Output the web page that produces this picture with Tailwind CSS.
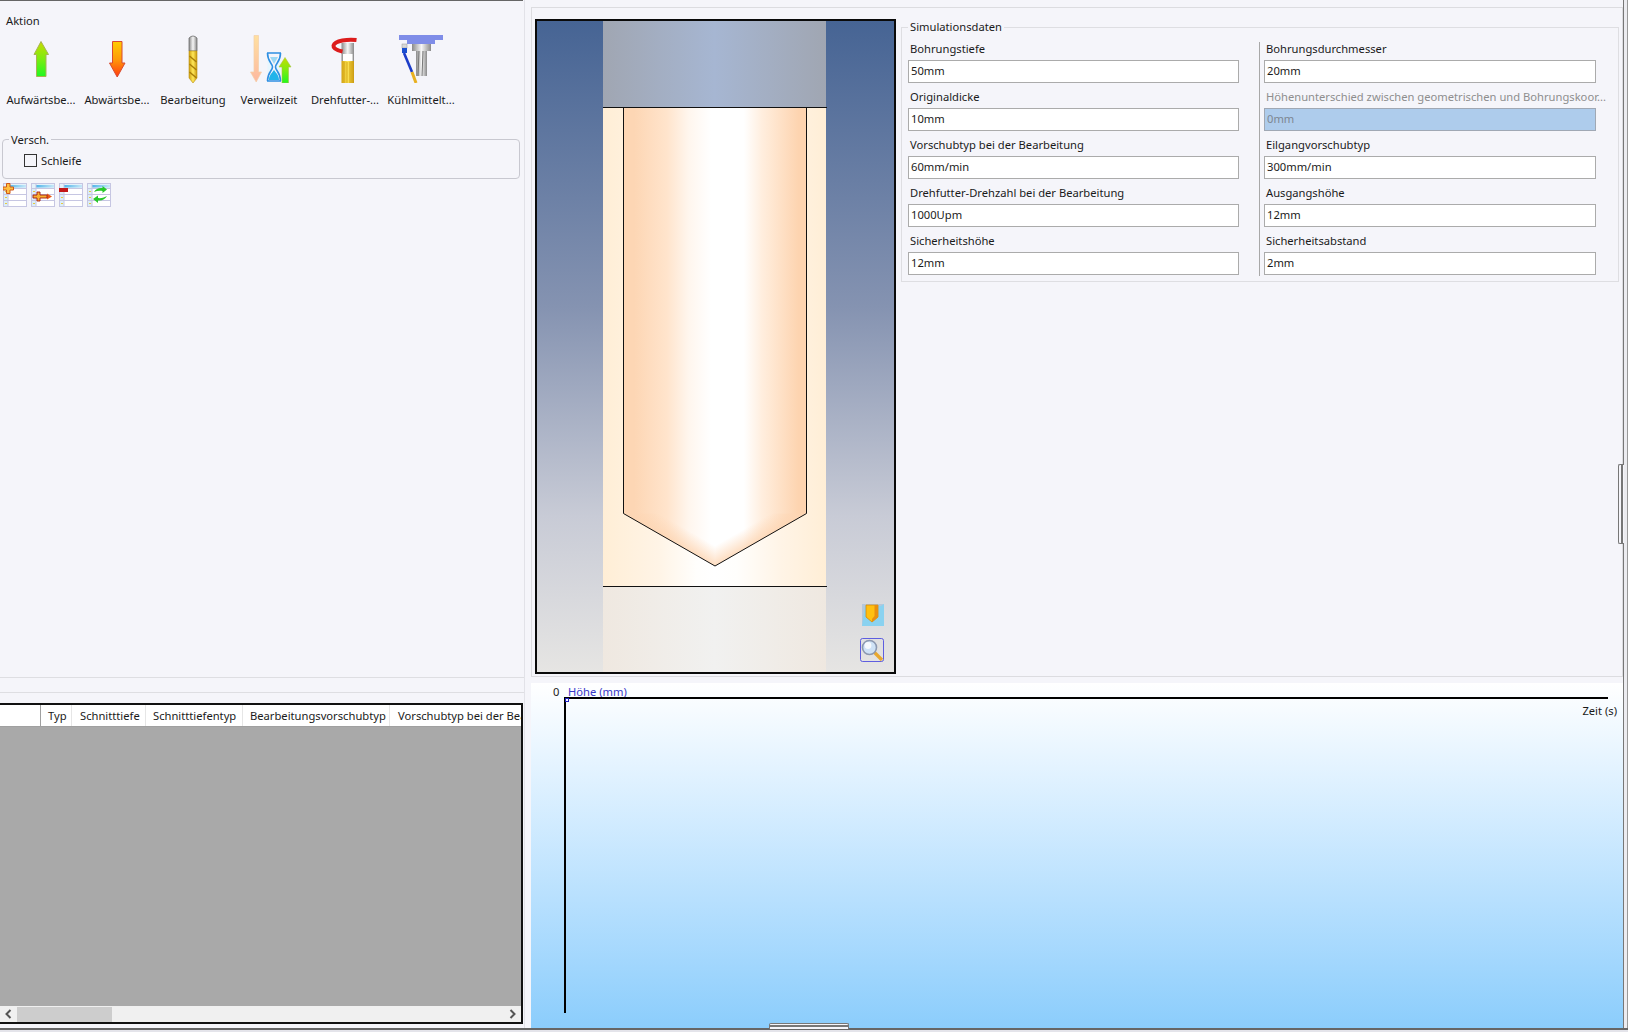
<!DOCTYPE html>
<html lang="de">
<head>
  <meta charset="UTF-8">
  <title>Simulationsdaten</title>
  <script src="https://cdn.jsdelivr.net/npm/@tailwindcss/browser@4"></script>
</head>
<body class="w-[1628px] h-[1032px] overflow-hidden bg-[#f5f5fa] text-[11.2px] text-[#1a1a1a] font-['Noto_Sans','Open_Sans',sans-serif]">

  <!-- shared drawings for the small table buttons -->
  <svg width="0" height="0" class="absolute">
    <defs>
      <linearGradient id="gUp" x1="0" y1="0" x2="0" y2="1"><stop offset="0" stop-color="#c8dc00"/><stop offset=".5" stop-color="#7cec10"/><stop offset="1" stop-color="#20f820"/></linearGradient>
      <linearGradient id="gDown" x1="0" y1="0" x2="0" y2="1"><stop offset="0" stop-color="#ffcc00"/><stop offset=".5" stop-color="#ff9a08"/><stop offset="1" stop-color="#ff3a10"/></linearGradient>
      <linearGradient id="gSteel" x1="0" y1="0" x2="1" y2="0"><stop offset="0" stop-color="#8a8a8a"/><stop offset=".5" stop-color="#f6f6f6"/><stop offset="1" stop-color="#8a8a8a"/></linearGradient>
      <linearGradient id="gGold" x1="0" y1="0" x2="1" y2="0"><stop offset="0" stop-color="#d0a010"/><stop offset=".5" stop-color="#ffe858"/><stop offset="1" stop-color="#c89810"/></linearGradient>
      <linearGradient id="gPeach" x1="0" y1="0" x2="0" y2="1"><stop offset="0" stop-color="#ffe0a0"/><stop offset="1" stop-color="#fdb8a0"/></linearGradient>
      <linearGradient id="gBar" x1="0" y1="0" x2="1" y2="0"><stop offset="0" stop-color="#4fb4e8"/><stop offset="1" stop-color="#c8e8f8"/></linearGradient>
      <symbol id="tbl" viewBox="0 0 24 24">
        <rect x=".5" y=".5" width="23" height="23" fill="#fff" stroke="#c6c6e2"/>
        <rect x="1" y="1" width="22" height="4" fill="#e4f2fa"/>
        <rect x="5" y="2" width="18" height="2.5" fill="url(#gBar)"/>
        <rect x="1" y="5" width="4" height="18" fill="#dbeef8"/>
        <path d="M1 5.5H23M1 11.5H23M1 17.5H23M5 1V23" stroke="#c6c6e2" fill="none"/>
        <path d="M2 8.5H4M2 14.5H4M2 20.5H4" stroke="#e8c840" fill="none"/>
      </symbol>
    </defs>
  </svg>

  <div class="flex h-[1028px]">

    <!-- left column -->
    <div class="w-[525px] shrink-0 flex flex-col border-r border-[#e2e2e8]">
      <div class="h-[678px] shrink-0 border-b border-[#dedee2]">
        <div class="h-px w-[523px] bg-[#666]"></div>
        <div class="h-[34px] pt-[11px] pl-[6px] leading-[18px]">Aktion</div>

        <div class="flex pl-[3px]">
          <div class="w-[76px] flex flex-col items-center">
            <svg width="48" height="48" viewBox="0 0 48 48"><path d="M24 6.5L31.5 19.5H29V41.5H19.5V19.5H17Z" fill="url(#gUp)" stroke="#a8b450"/></svg>
            <div class="mt-[8px] leading-[18px]">Aufwärtsbe...</div>
          </div>
          <div class="w-[76px] flex flex-col items-center">
            <svg width="48" height="48" viewBox="0 0 48 48"><path d="M19.5 6.5H29V28H32L24.2 42L16.5 28H19.5Z" fill="url(#gDown)" stroke="#d84a30"/></svg>
            <div class="mt-[8px] leading-[18px]">Abwärtsbe...</div>
          </div>
          <div class="w-[76px] flex flex-col items-center">
            <svg width="48" height="48" viewBox="0 0 48 48">
              <path d="M20 16V3Q24 -1 28 3V16Z" fill="url(#gSteel)" stroke="#707070" stroke-width=".8"/>
              <path d="M20 16H28V43L24 48L20 43Z" fill="url(#gGold)" stroke="#b89010" stroke-width=".6"/>
              <path d="M20.5 21L27.5 27M20.5 29L27.5 35M20.5 37L27.5 43" stroke="#a87e08" stroke-width="1.5" fill="none"/>
            </svg>
            <div class="mt-[8px] leading-[18px]">Bearbeitung</div>
          </div>
          <div class="w-[76px] flex flex-col items-center">
            <svg width="48" height="48" viewBox="0 0 48 48">
              <path d="M9 .5H13.5V37H16.5L11.2 47L5.5 37H9Z" fill="url(#gPeach)" stroke="#f4d0a8" stroke-width=".7"/>
              <path d="M22 18H36M22 46H36M22.5 18C22.5 27 27.5 28 27.5 32C27.5 36 22.5 37 22.5 46M35.5 18C35.5 27 30.5 28 30.5 32C30.5 36 35.5 37 35.5 46" stroke="#2e8fe2" stroke-width="1.6" fill="#e8f6fd"/>
              <path d="M24 45C24 40 27 38 29 35C31 38 34 40 34 45Z" fill="#22b4ea"/>
              <path d="M25 22H33L29 29Z" fill="#9cd8f4"/>
              <path d="M40 22.5L46 32H43.5V48H37V32H34Z" fill="url(#gUp)" stroke="#a8c440" stroke-width=".6"/>
            </svg>
            <div class="mt-[8px] leading-[18px]">Verweilzeit</div>
          </div>
          <div class="w-[76px] flex flex-col items-center">
            <svg width="48" height="48" viewBox="0 0 48 48">
              <rect x="20.5" y="8" width="12.5" height="18" fill="url(#gSteel)"/>
              <rect x="22" y="19" width="9.5" height="7" fill="#fff"/>
              <path d="M20.5 26H33V48H20.5Z" fill="url(#gGold)"/>
              <path d="M23 27V48M26 27V48M29 27V48M31 27V48" stroke="#d8a818" fill="none"/>
              <path d="M35.5 5C27 4 14 5.5 12.5 10.5C12 14 17 15.5 21.5 16.5" stroke="#dc1c1c" stroke-width="4" fill="none"/>
            </svg>
            <div class="mt-[8px] leading-[18px]">Drehfutter-...</div>
          </div>
          <div class="w-[76px] flex flex-col items-center">
            <svg width="48" height="48" viewBox="0 0 48 48">
              <path d="M2 0H46V5H38V9H10V5H2Z" fill="#7f8de8"/>
              <rect x="15" y="9" width="19" height="7" fill="url(#gSteel)"/>
              <rect x="19" y="16" width="11" height="25" fill="url(#gSteel)"/>
              <path d="M22 16L21 41M26 16L25 41" stroke="#777" fill="none"/>
              <rect x="5" y="9" width="5" height="4" fill="#d8d8d8" stroke="#999" stroke-width=".5"/>
              <rect x="5" y="13" width="5" height="5" fill="#1a4fd0"/>
              <path d="M7 18L15 37" stroke="#1c3cc8" stroke-width="2.6" fill="none"/>
              <path d="M15 37L19 48" stroke="#e8b020" stroke-width="3" fill="none"/>
            </svg>
            <div class="mt-[8px] leading-[18px]">Kühlmittelt...</div>
          </div>
        </div>

        <div class="relative mt-[30px] ml-[2px] w-[518px] h-[40px] rounded-[4px] border border-[#c8c8d0] flex items-center pl-[21px] pt-[3px]">
          <span class="absolute left-[6px] -top-[8px] px-[2px] leading-[16px] bg-[#f5f5fa]">Versch.</span>
          <span class="w-[13px] h-[13px] border border-[#333] bg-[#f5f5fa] mr-[4px]"></span>
          <span class="pt-[1px]">Schleife</span>
        </div>

        <div class="flex gap-[4px] mt-[4px] pl-[3px]">
          <svg width="24" height="24" viewBox="0 0 24 24"><use href="#tbl"/><path d="M3.5 .5H7V4H10.5V7H7V10.5H3.5V7H0V4H3.5Z" fill="#ffc040" stroke="#d05818"/></svg>
          <svg width="24" height="24" viewBox="0 0 24 24"><use href="#tbl"/><path d="M16 10.5L21 13.5L16 16.5Z" fill="#e85818"/><path d="M6 9H9V12H16V15H9V18H6V15H2V12H6Z" fill="#f8b030" stroke="#a01810" stroke-width=".9"/></svg>
          <svg width="24" height="24" viewBox="0 0 24 24"><use href="#tbl"/><rect x="0" y="5" width="9" height="4" fill="#c41818"/></svg>
          <svg width="24" height="24" viewBox="0 0 24 24"><use href="#tbl"/><path d="M7 9C8.5 6 12 4.5 15.5 5V3L20 6.5L15.5 10V8C12.5 7.5 9.5 8 7 9ZM20 13C18.5 16 15 18 11 17.5V20L6 16L11 12.5V15C14.5 15.5 17.5 14.5 20 13Z" fill="#28c828"/></svg>
        </div>
      </div>

      <div class="mt-[14px] flex-1 border-t border-[#dedee2] pt-[10px]">
        <div class="w-[523px] h-[321px] flex flex-col border-t-2 border-b-2 border-r-2 border-[#111] bg-[#a9a9a9]">
          <div class="h-[22px] shrink-0 flex bg-white border-b border-[#a0a0a0] leading-[22px] whitespace-nowrap overflow-hidden">
            <div class="w-[41px] shrink-0 border-r border-[#a0a0a0]"></div>
            <div class="w-[31px] shrink-0 border-r border-[#e6e6e6] pl-[7px]">Typ</div>
            <div class="w-[74px] shrink-0 border-r border-[#e6e6e6] pl-[8px]">Schnitttiefe</div>
            <div class="w-[97px] shrink-0 border-r border-[#e6e6e6] pl-[7px]">Schnitttiefentyp</div>
            <div class="w-[147px] shrink-0 border-r border-[#e6e6e6] pl-[7px]">Bearbeitungsvorschubtyp</div>
            <div class="flex-1 pl-[8px] overflow-hidden">Vorschubtyp bei der Bearbeitung</div>
          </div>
          <div class="flex-1"></div>
          <div class="h-[16px] shrink-0 bg-[#f0f0f0] flex items-center">
            <svg width="17" height="16" viewBox="0 0 17 16" class="shrink-0"><path d="M10.5 4L6.5 8L10.5 12" stroke="#555" stroke-width="2" fill="none"/></svg>
            <div class="w-[95px] h-[15px] bg-[#cdcdcd]"></div>
            <div class="flex-1"></div>
            <svg width="17" height="16" viewBox="0 0 17 16" class="shrink-0"><path d="M6.5 4L10.5 8L6.5 12" stroke="#555" stroke-width="2" fill="none"/></svg>
          </div>
        </div>
      </div>
    </div>

    <!-- right column -->
    <div class="w-[1098px] shrink-0 pl-[6px] pt-[7px] flex flex-col">
      <div class="h-[670px] shrink-0 border border-[#dcdce0] flex items-start pl-[3px] pt-[11px]">
        <div class="relative w-[361px] h-[655px] shrink-0 border-2 border-[#0a0a0a]">
          <svg width="357" height="651" viewBox="537 21 357 651" class="block">
            <defs>
              <linearGradient id="gSky" x1="0" y1="0" x2="0" y2="1">
                <stop offset="0" stop-color="#466494"/><stop offset=".44" stop-color="#8593b1"/><stop offset=".76" stop-color="#c8cbd6"/><stop offset="1" stop-color="#e6e5e3"/>
              </linearGradient>
              <linearGradient id="gHolder" x1="0" y1="0" x2="1" y2="0">
                <stop offset="0" stop-color="#a0a6b2"/><stop offset=".5" stop-color="#a6b6d2"/><stop offset="1" stop-color="#a0a6b2"/>
              </linearGradient>
              <linearGradient id="gStock" x1="0" y1="0" x2="1" y2="0">
                <stop offset="0" stop-color="#ffeed6"/><stop offset=".25" stop-color="#fff4e6"/><stop offset=".42" stop-color="#fffefc"/><stop offset=".5" stop-color="#fff"/><stop offset=".6" stop-color="#fffefc"/><stop offset=".8" stop-color="#fff4e6"/><stop offset="1" stop-color="#ffeed6"/>
              </linearGradient>
              <linearGradient id="gHole" x1="623" y1="0" x2="806" y2="0" gradientUnits="userSpaceOnUse">
                <stop offset="0" stop-color="#fdd6b4"/><stop offset=".06" stop-color="#fdd6b4"/><stop offset=".24" stop-color="#ffe4cc"/><stop offset=".36" stop-color="#fff6ee"/><stop offset=".48" stop-color="#fff"/><stop offset=".66" stop-color="#fff"/><stop offset=".76" stop-color="#ffeede"/><stop offset=".96" stop-color="#fdd4b0"/><stop offset="1" stop-color="#fdd4b0"/>
              </linearGradient>
              <linearGradient id="gBase" x1="0" y1="0" x2="1" y2="0">
                <stop offset="0" stop-color="#efe8e0"/><stop offset=".5" stop-color="#f1f1f0"/><stop offset="1" stop-color="#efe8e0"/>
              </linearGradient>
              <linearGradient id="gTipL" x1="669" y1="540" x2="678" y2="524.4" gradientUnits="userSpaceOnUse">
                <stop offset="0" stop-color="#fdd6b4" stop-opacity=".85"/><stop offset="1" stop-color="#fdd6b4" stop-opacity="0"/>
              </linearGradient>
              <linearGradient id="gTipR" x1="761" y1="540" x2="752" y2="524.4" gradientUnits="userSpaceOnUse">
                <stop offset="0" stop-color="#fdd6b4" stop-opacity=".85"/><stop offset="1" stop-color="#fdd6b4" stop-opacity="0"/>
              </linearGradient>
            </defs>
            <rect x="537" y="21" width="357" height="651" fill="url(#gSky)"/>
            <rect x="603" y="21" width="223" height="86" fill="url(#gHolder)"/>
            <rect x="603" y="107" width="223" height="479" fill="url(#gStock)"/>
            <rect x="603" y="587" width="223" height="85" fill="url(#gBase)"/>
            <path d="M623.5 107.5V513.5L715 566L806.5 513.5V107.5Z" fill="url(#gHole)"/>
            <path d="M623.5 513.5H715V566Z" fill="url(#gTipL)"/>
            <path d="M806.5 513.5H715V566Z" fill="url(#gTipR)"/>
            <path d="M623.5 107.5V513.5L715 566L806.5 513.5V107.5" fill="none" stroke="#111"/>
            <path d="M603 107.5H827M603 586.5H827" stroke="#111"/>
          </svg>
          <svg width="24" height="24" viewBox="0 0 24 24" class="absolute left-[324px] top-[582px]">
            <rect x="1" y="1" width="22" height="22" fill="#8ad2f0"/>
            <path d="M1 1H23L20 3H4L1 23Z" fill="#b4c8dc"/>
            <path d="M5 2H17V14L11 19L5 14Z" fill="#ffc010" stroke="#d88808" stroke-width=".8"/>
            <path d="M13.5 2H17V14L11 19V16L13.5 13Z" fill="#e89010"/>
          </svg>
          <svg width="24" height="24" viewBox="0 0 24 24" class="absolute left-[323px] top-[617px]">
            <rect x=".5" y=".5" width="23" height="23" rx="2" fill="none" stroke="#3c3ce0" stroke-width=".8"/>
            <path d="M14 14L22 22" stroke="#e8a830" stroke-width="3.4"/>
            <circle cx="9.5" cy="9.5" r="7" fill="#cfe2f6" stroke="#8c98b0" stroke-width="1.6"/>
            <circle cx="8" cy="7.5" r="3.4" fill="#fff" opacity=".8"/>
          </svg>
        </div>

        <div class="relative ml-[5px] mt-[8px] w-[718px] h-[255px] shrink-0 border border-[#dedee2] pl-[6px] pt-[7px]">
          <span class="absolute left-[6px] -top-[9px] px-[2px] leading-[16px] bg-[#f5f5fa]">Simulationsdaten</span>
          <div class="absolute left-[357px] top-[14px] w-px h-[234px] bg-[#a8a8a8]"></div>
          <div class="grid grid-cols-[356px_332px] auto-rows-[48px]">
            <div><div class="h-[25px] pt-[5px] pl-[2px] leading-[18px]">Bohrungstiefe</div><div class="w-[331px] h-[23px] border border-[#ababab] bg-white pl-[2px] leading-[20px]">50mm</div></div>
            <div><div class="h-[25px] pt-[5px] pl-[2px] leading-[18px]">Bohrungsdurchmesser</div><div class="h-[23px] border border-[#ababab] bg-white pl-[2px] leading-[20px]">20mm</div></div>
            <div><div class="h-[25px] pt-[5px] pl-[2px] leading-[18px]">Originaldicke</div><div class="w-[331px] h-[23px] border border-[#ababab] bg-white pl-[2px] leading-[20px]">10mm</div></div>
            <div><div class="h-[25px] pt-[5px] pl-[2px] leading-[18px] text-[#8e8e8e] whitespace-nowrap">Höhenunterschied zwischen geometrischen und Bohrungskoor...</div><div class="h-[23px] border border-[#a0a8b4] bg-[#aeccec] text-[#7d8792] pl-[2px] leading-[20px]">0mm</div></div>
            <div><div class="h-[25px] pt-[5px] pl-[2px] leading-[18px]">Vorschubtyp bei der Bearbeitung</div><div class="w-[331px] h-[23px] border border-[#ababab] bg-white pl-[2px] leading-[20px]">60mm/min</div></div>
            <div><div class="h-[25px] pt-[5px] pl-[2px] leading-[18px]">Eilgangvorschubtyp</div><div class="h-[23px] border border-[#ababab] bg-white pl-[2px] leading-[20px]">300mm/min</div></div>
            <div><div class="h-[25px] pt-[5px] pl-[2px] leading-[18px]">Drehfutter-Drehzahl bei der Bearbeitung</div><div class="w-[331px] h-[23px] border border-[#ababab] bg-white pl-[2px] leading-[20px]">1000Upm</div></div>
            <div><div class="h-[25px] pt-[5px] pl-[2px] leading-[18px]">Ausgangshöhe</div><div class="h-[23px] border border-[#ababab] bg-white pl-[2px] leading-[20px]">12mm</div></div>
            <div><div class="h-[25px] pt-[5px] pl-[2px] leading-[18px]">Sicherheitshöhe</div><div class="w-[331px] h-[23px] border border-[#ababab] bg-white pl-[2px] leading-[20px]">12mm</div></div>
            <div><div class="h-[25px] pt-[5px] pl-[2px] leading-[18px]">Sicherheitsabstand</div><div class="h-[23px] border border-[#ababab] bg-white pl-[2px] leading-[20px]">2mm</div></div>
          </div>
        </div>
      </div>

      <!-- chart -->
      <div class="relative mt-[6px] h-[345px] bg-gradient-to-b from-white to-[#8bcdfc]">
        <span class="absolute left-[22px] top-0 leading-[18px]">0</span>
        <span class="absolute left-[37px] top-0 leading-[18px] text-[#3838c8]">Höhe (mm)</span>
        <div class="absolute left-[33px] top-[14px] w-[1044px] h-[2px] bg-black"></div>
        <div class="absolute left-[33px] top-[14px] w-[2px] h-[316px] bg-black"></div>
        <div class="absolute left-[34px] top-[15px] w-[4px] h-[4px] border border-[#2020c0]"></div>
        <span class="absolute right-[6px] top-[19px] leading-[18px]">Zeit (s)</span>
      </div>
    </div>

    <!-- outer frame strip on the right -->
    <div class="relative flex-1 border-l border-[#777] border-r border-r-[#999] bg-[#ececf0]">
      <div class="absolute -left-[6px] top-[464px] w-[6px] h-[80px] rounded-l-[2px] border border-r-0 border-[#777] bg-[#f5f5fa] flex justify-center">
        <div class="w-[2px] h-full border-x border-[#777]"></div>
      </div>
    </div>
  </div>

  <!-- bottom splitter -->
  <div class="relative h-[4px] border-t-2 border-[#666] bg-[#e4e4ea]">
    <div class="absolute left-[769px] -top-[7px] w-[80px] h-[6px] rounded-t-[2px] border border-b-0 border-[#777] bg-[#f5f5fa] pt-[1px]">
      <div class="h-[2px] border-y border-[#777]"></div>
    </div>
  </div>
</body>
</html>
